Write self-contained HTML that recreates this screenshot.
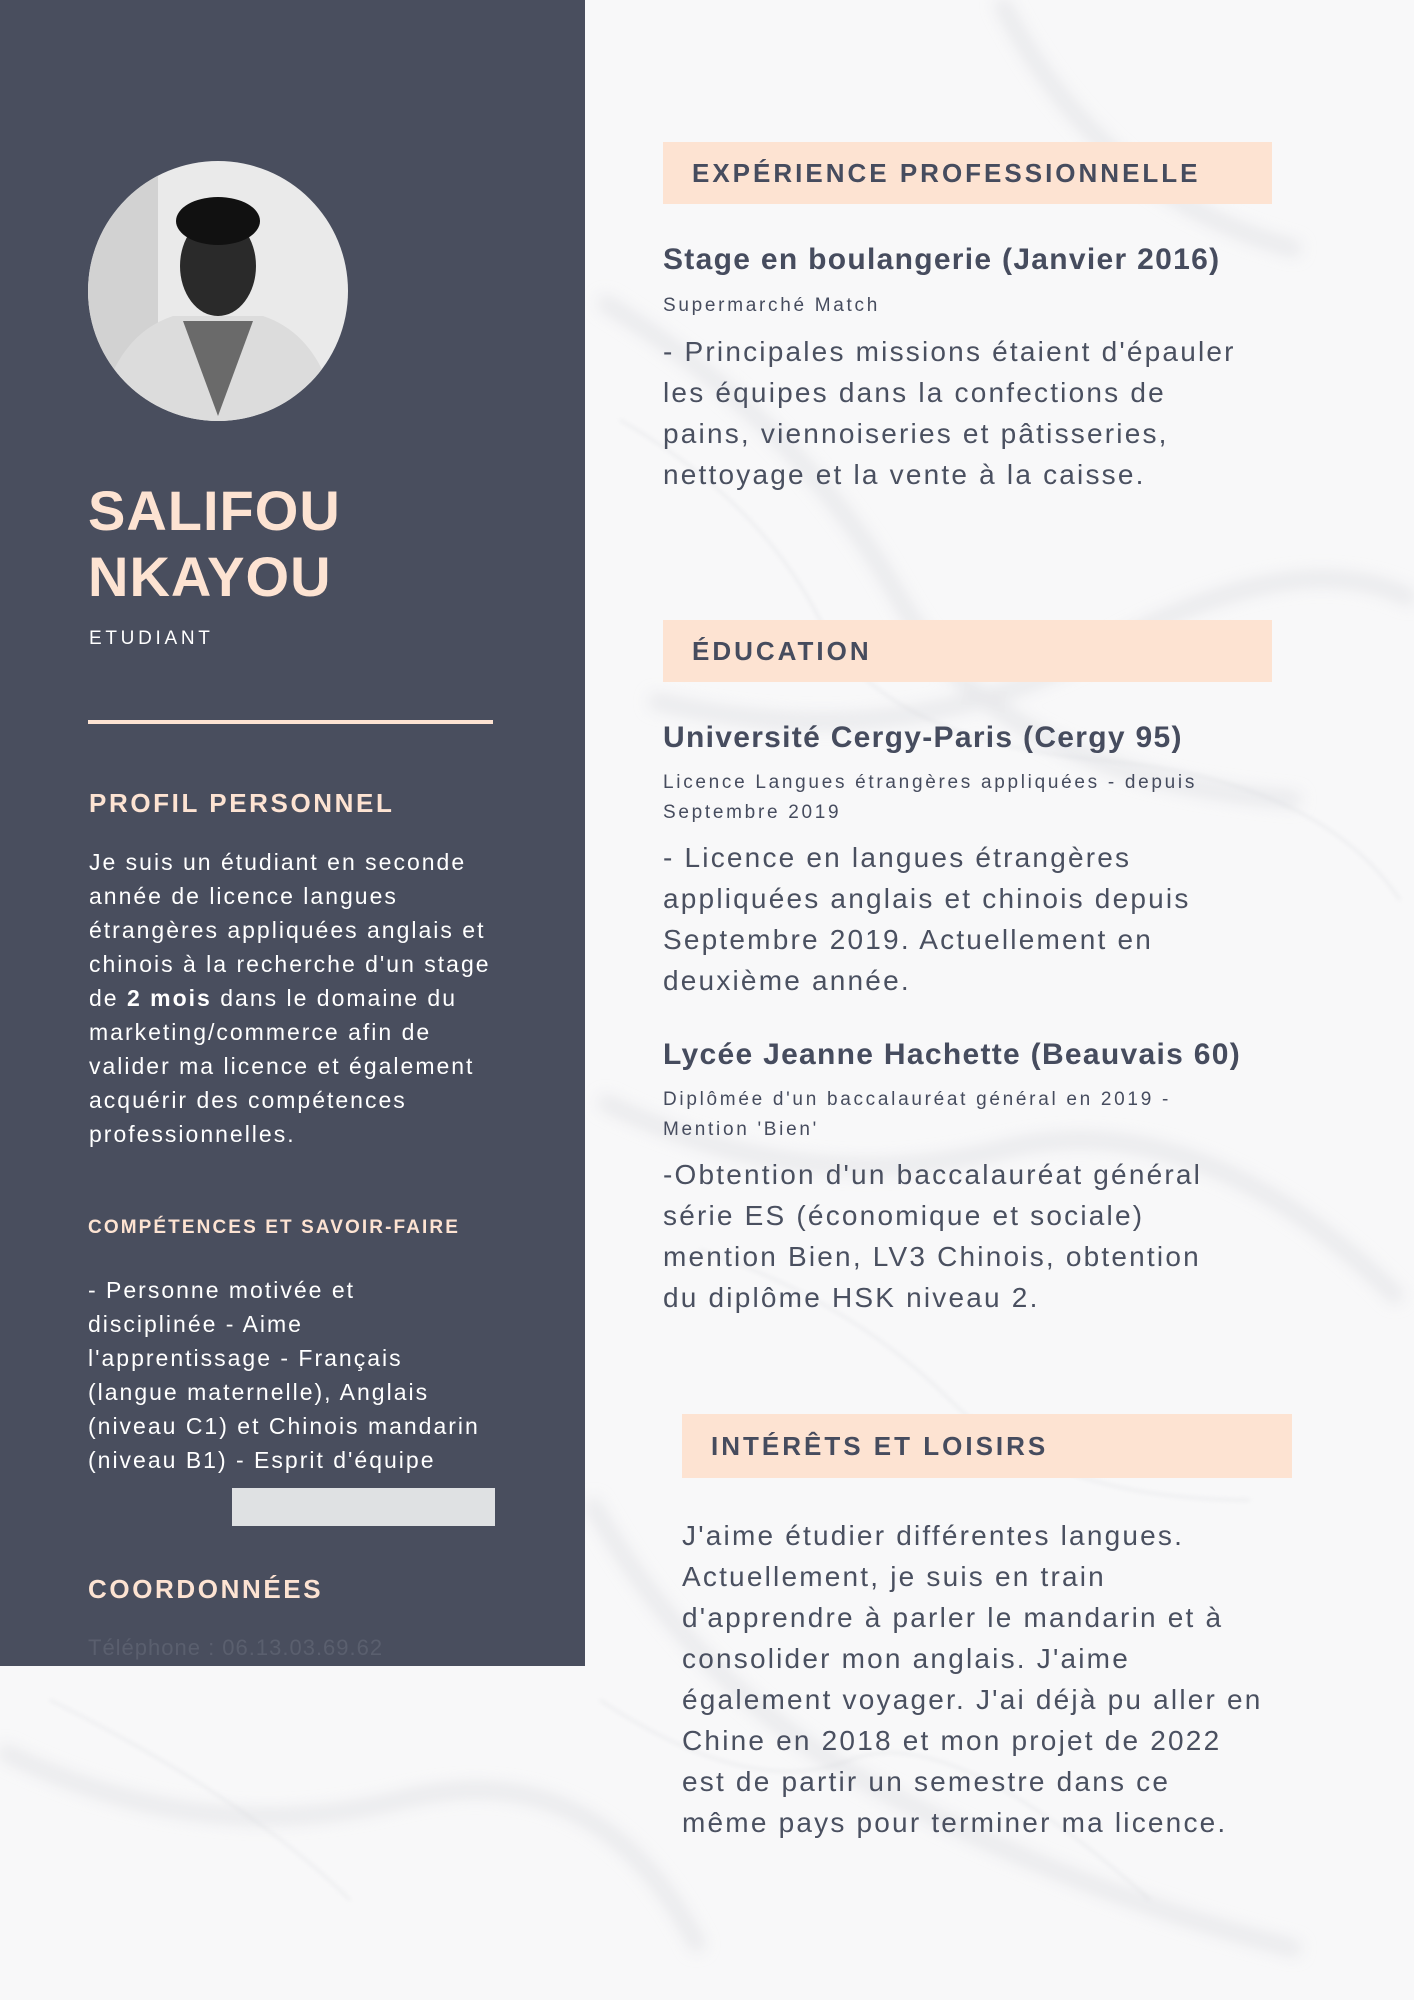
<!DOCTYPE html>
<html><head><meta charset="utf-8"><style>
*{margin:0;padding:0;box-sizing:border-box}
body{width:1414px;height:2000px;position:relative;overflow:hidden;font-family:"Liberation Sans","DejaVu Sans",sans-serif;background:#f7f7f8;color:#4a5060}
.bg{position:absolute;inset:0}
.side{position:absolute;left:0;top:0;width:585px;height:1666px;background:#494e5e;color:#fff}
.a{position:absolute;white-space:nowrap}
.peach{color:#fde3d2}
.box{position:absolute;background:#fde3d2;color:#464c5e;font-weight:bold;font-size:26px;letter-spacing:3px;display:flex;align-items:center;padding-left:29px;white-space:nowrap}
.t{position:absolute;font-weight:bold;font-size:30px;color:#464c5e;white-space:nowrap;letter-spacing:1.3px}
.s{position:absolute;font-size:19px;letter-spacing:2.7px;color:#464c5e;line-height:30px;white-space:nowrap}
.p{position:absolute;font-size:28px;line-height:41px;color:#4a5060;white-space:nowrap;letter-spacing:2.2px}
.lp{position:absolute;font-size:23px;line-height:34px;color:#fff;white-space:nowrap;letter-spacing:2px}
</style></head><body>
<svg class="bg" width="1414" height="2000">
<defs><filter id="b"><feGaussianBlur stdDeviation="8"/></filter><filter id="b2"><feGaussianBlur stdDeviation="2"/></filter></defs>
<rect width="1414" height="2000" fill="#f8f8f9"/>
<g filter="url(#b)" fill="none" stroke="#d6d7db" stroke-width="14" opacity=".5">
<path d="M600 300 Q800 420 900 600 T1300 800"/><path d="M650 700 Q900 760 1100 650 T1414 600"/>
<path d="M600 1100 Q800 1200 1000 1150 T1400 1300"/><path d="M590 1500 Q700 1700 900 1800 T1300 1950"/>
<path d="M0 1750 Q200 1850 400 1800 T700 1950"/><path d="M1000 0 Q1100 200 1300 250"/>
</g>
<g filter="url(#b2)" fill="none" stroke="#cfd0d5" stroke-width="1.5" opacity=".5">
<path d="M620 420 Q760 500 820 620 T1100 760 T1400 900"/><path d="M700 1250 Q850 1300 950 1400 T1250 1500"/>
<path d="M600 1700 Q750 1800 850 1760 T1150 1900"/><path d="M50 1700 Q250 1800 350 1900"/>
</g>
</svg>
<div class="side">
<svg class="a" style="left:88px;top:161px" width="260" height="260">
<defs><clipPath id="c"><circle cx="130" cy="130" r="130"/></clipPath></defs>
<g clip-path="url(#c)">
<rect width="260" height="260" fill="#eaeaea"/>
<rect x="0" y="0" width="70" height="260" fill="#d2d2d2"/>
<path d="M10 260 Q25 175 85 155 L175 155 Q235 175 250 260Z" fill="#dcdcdc"/>
<path d="M95 160 L130 255 L165 160Z" fill="#6a6a6a"/>
<ellipse cx="130" cy="105" rx="38" ry="50" fill="#2a2a2a"/>
<ellipse cx="130" cy="60" rx="42" ry="24" fill="#111"/>
</g></svg>
<div class="a peach" style="left:88px;top:478px;font-size:56px;font-weight:bold;line-height:66px;letter-spacing:1px">SALIFOU<br>NKAYOU</div>
<div class="a" style="left:89px;top:628px;font-size:19px;letter-spacing:3.7px">ETUDIANT</div>
<div class="a" style="left:88px;top:720px;width:405px;height:4px;background:#fde3d2"></div>
<div class="a peach" style="left:89px;top:788px;font-size:26px;font-weight:bold;letter-spacing:2.6px">PROFIL PERSONNEL</div>
<div class="lp" style="left:89px;top:845px">Je suis un étudiant en seconde<br>année de licence langues<br>étrangères appliquées anglais et<br>chinois à la recherche d'un stage<br>de <b>2 mois</b> dans le domaine du<br>marketing/commerce afin de<br>valider ma licence et également<br>acquérir des compétences<br>professionnelles.</div>
<div class="a peach" style="left:88px;top:1217px;font-size:19px;font-weight:bold;letter-spacing:2.1px">COMPÉTENCES ET SAVOIR-FAIRE</div>
<div class="lp" style="left:88px;top:1273px">- Personne motivée et<br>disciplinée - Aime<br>l'apprentissage - Français<br>(langue maternelle), Anglais<br>(niveau C1) et Chinois mandarin<br>(niveau B1) - Esprit d'équipe</div>
<div class="a" style="left:232px;top:1488px;width:263px;height:38px;background:#dfe1e3"></div>
<div class="a peach" style="left:88px;top:1574px;font-size:26px;font-weight:bold;letter-spacing:2.6px">COORDONNÉES</div>
<div class="a" style="left:88px;top:1635px;font-size:22px;color:#5a5f6e;letter-spacing:1px">Téléphone : 06.13.03.69.62</div>
</div>
<div class="box" style="left:663px;top:142px;width:609px;height:62px">EXPÉRIENCE PROFESSIONNELLE</div>
<div class="t" style="left:663px;top:243px">Stage en boulangerie (Janvier 2016)</div>
<div class="s" style="left:663px;top:291px">Supermarché Match</div>
<div class="p" style="left:663px;top:331px">- Principales missions étaient d'épauler<br>les équipes dans la confections de<br>pains, viennoiseries et pâtisseries,<br>nettoyage et la vente à la caisse.</div>
<div class="box" style="left:663px;top:620px;width:609px;height:62px">ÉDUCATION</div>
<div class="t" style="left:663px;top:721px">Université Cergy-Paris (Cergy 95)</div>
<div class="s" style="left:663px;top:768px">Licence Langues étrangères appliquées - depuis<br>Septembre 2019</div>
<div class="p" style="left:663px;top:837px">- Licence en langues étrangères<br>appliquées anglais et chinois depuis<br>Septembre 2019. Actuellement en<br>deuxième année.</div>
<div class="t" style="left:663px;top:1038px">Lycée Jeanne Hachette (Beauvais 60)</div>
<div class="s" style="left:663px;top:1085px">Diplômée d'un baccalauréat général en 2019 -<br>Mention 'Bien'</div>
<div class="p" style="left:663px;top:1154px">-Obtention d'un baccalauréat général<br>série ES (économique et sociale)<br>mention Bien, LV3 Chinois, obtention<br>du diplôme HSK niveau 2.</div>
<div class="box" style="left:682px;top:1414px;width:610px;height:64px">INTÉRÊTS ET LOISIRS</div>
<div class="p" style="left:682px;top:1515px">J'aime étudier différentes langues.<br>Actuellement, je suis en train<br>d'apprendre à parler le mandarin et à<br>consolider mon anglais. J'aime<br>également voyager. J'ai déjà pu aller en<br>Chine en 2018 et mon projet de 2022<br>est de partir un semestre dans ce<br>même pays pour terminer ma licence.</div>
</body></html>
